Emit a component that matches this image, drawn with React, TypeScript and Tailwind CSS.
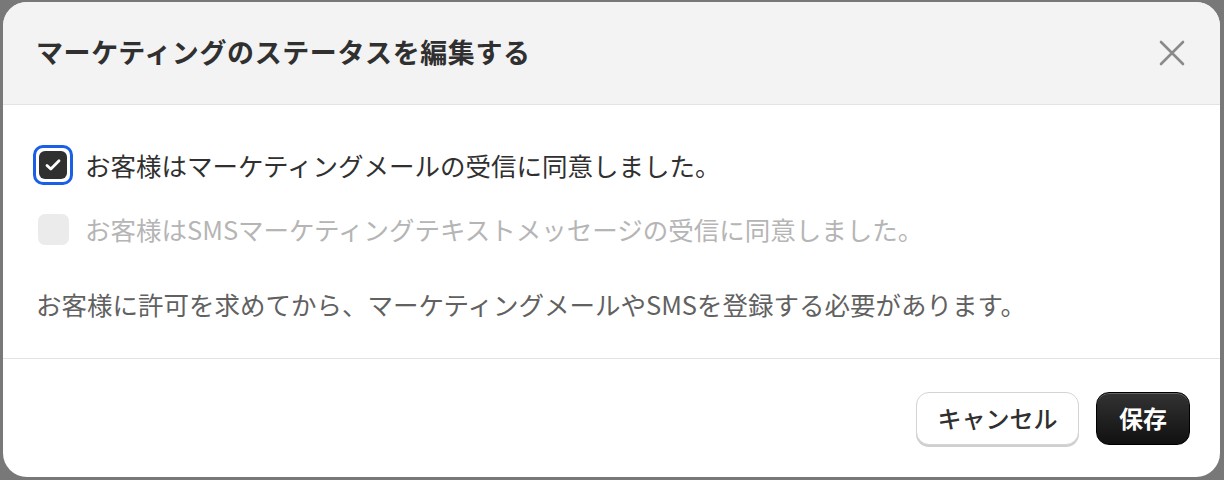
const font = { fontFamily: '"Noto Sans CJK JP", "Noto Sans", sans-serif' };

function CheckedBox() {
  return (
    <div className="flex h-[40px] w-[40px] items-center justify-center rounded-[10px] border-[3px] border-[#1a5fe6] bg-white">
      <div className="flex h-[28px] w-[28px] items-center justify-center rounded-[6px] bg-[#303030]">
        <svg width="20" height="20" viewBox="0 0 20 20" fill="none">
          <path d="M4 10.5l3.8 3.6L16 5.8" stroke="#fff" strokeWidth="2.8" strokeLinecap="round" strokeLinejoin="round" />
        </svg>
      </div>
    </div>
  );
}

export default function App() {
  return (
    <div className="flex h-[480px] w-[1224px] bg-[#787878] pt-[2px] pl-[3px] pr-[4px] pb-[3px]" style={font}>
      <div className="flex flex-1 flex-col overflow-hidden rounded-[24px] bg-white">
        <div className="flex h-[103px] items-center justify-between border-b border-[#e3e3e3] bg-[#f3f3f3] pl-[33px] pr-[35px]">
          <h1 className="-mt-[2px] text-[27px] font-bold tracking-[0.6px] text-[#303030]">
            マーケティングのステータスを編集する
          </h1>
          <svg width="26" height="26" viewBox="0 0 26 26" fill="none">
            <path d="M2 2L24 24M24 2L2 24" stroke="#8a8a8a" strokeWidth="2.6" strokeLinecap="round" />
          </svg>
        </div>

        <div className="flex flex-col border-b border-[#e3e3e3] px-[30px] pt-[40px] pb-[36px]">
          <label className="flex h-[40px] items-center gap-[12px]">
            <CheckedBox />
            <span className="text-[25.5px] text-[#303030]">
              お客様はマーケティングメールの受信に同意しました。
            </span>
          </label>
          <label className="mt-[24px] flex h-[40px] items-center gap-[12px]">
            <div className="flex h-[40px] w-[40px] items-center justify-center">
              <div className="h-[31px] w-[31px] rounded-[7px] bg-[#ebebeb]" />
            </div>
            <span className="text-[25.5px] text-[#b5b5b5]">
              お客様はSMSマーケティングテキストメッセージの受信に同意しました。
            </span>
          </label>
          <p className="mt-[37px] pl-[3px] text-[25.5px] leading-[36px] text-[#616161]">
            お客様に許可を求めてから、マーケティングメールやSMSを登録する必要があります。
          </p>
        </div>

        <div className="flex flex-1 items-center justify-end gap-[17px] pr-[30px]">
          <button className="h-[53px] w-[163px] rounded-[13px] border border-[#d4d4d4] bg-white text-[24px] font-medium text-[#303030] shadow-[0_2px_0_#cfcfcf]">
            キャンセル
          </button>
          <button className="h-[53px] w-[94px] rounded-[13px] border border-[#000] bg-gradient-to-b from-[#333] to-[#111] text-[24px] font-bold text-white shadow-[inset_0_1px_0_rgba(255,255,255,0.25)]">
            保存
          </button>
        </div>
      </div>
    </div>
  );
}
